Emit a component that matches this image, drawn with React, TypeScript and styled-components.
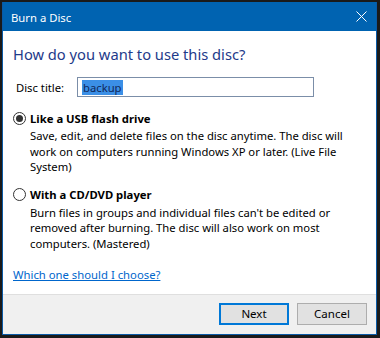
import React from "react";
import styled, { createGlobalStyle } from "styled-components";

const Global = createGlobalStyle`
  html, body { margin: 0; padding: 0; background: #1a1a1a; }
  body { font-family: "Noto Sans", "Liberation Sans", sans-serif; }
  * { box-sizing: border-box; }
`;

const Frame = styled.div`
  width: 380px;
  height: 338px;
  padding: 2px 3px 3px 2px;
  background: #1a1a1a;
`;

const Window = styled.div`
  width: 375px;
  height: 333px;
  display: flex;
  flex-direction: column;
  background: #ffffff;
  border: 1px solid #0a5aa6;
  border-top: none;
`;

const TitleBar = styled.div`
  height: 29px;
  flex: none;
  display: flex;
  align-items: center;
  justify-content: space-between;
  background: #0063b1;
  color: #ffffff;
  padding: 0 9px 0 8px;
  font-size: 11.3px;
`;

const TitleText = styled.span`
  padding-top: 1px;
`;

const CloseButton = styled.div`
  width: 12px;
  height: 12px;
  display: flex;
  align-items: center;
  justify-content: center;
`;

const Body = styled.div`
  flex: 1;
  padding: 13px 12px 0 10px;
  color: #000000;
  font-size: 11.25px;
`;

const Heading = styled.div`
  font-size: 14.7px;
  line-height: 21px;
  color: #1e3a8a;
`;

const TitleRow = styled.div`
  display: flex;
  align-items: center;
  margin-top: 12px;
  padding-left: 3px;
`;

const Label = styled.span`
  width: 61px;
  flex: none;
`;

const Input = styled.div`
  width: 237px;
  height: 20px;
  border: 1px solid #7b8ea8;
  display: flex;
  align-items: center;
  padding-left: 4px;
`;

const Selection = styled.span`
  background: #3b8fe6;
  color: #10285a;
  line-height: 15px;
  padding: 0 1px;
`;

const Option = styled.div<{ $first?: boolean }>`
  margin-top: ${(p) => (p.$first ? "13px" : "12px")};
`;

const OptionHead = styled.div`
  display: flex;
  align-items: center;
  gap: 4px;
  height: 16px;
`;

const Radio = styled.span<{ $checked?: boolean }>`
  width: 13px;
  height: 13px;
  border-radius: 50%;
  border: 1px solid #333333;
  display: flex;
  align-items: center;
  justify-content: center;
  flex: none;
  &::after {
    content: "";
    width: 7px;
    height: 7px;
    border-radius: 50%;
    background: ${(p) => (p.$checked ? "#333333" : "transparent")};
  }
`;

const OptionLabel = styled.span`
  font-weight: 700;
  font-size: 11.3px;
`;

const Description = styled.div`
  padding-left: 17px;
  line-height: 15.5px;
  margin-top: 2px;
`;

const Link = styled.a`
  display: inline-block;
  margin-top: 16px;
  color: #0066cc;
  text-decoration: underline;
  font-size: 11.3px;
  cursor: pointer;
`;

const Footer = styled.div`
  height: 40px;
  flex: none;
  background: #f0f0f0;
  border-top: 1px solid #dfdfdf;
  display: flex;
  justify-content: flex-end;
  align-items: center;
  gap: 8px;
  padding: 0 9px 2px 0;
`;

const Button = styled.button<{ $default?: boolean }>`
  width: 70px;
  height: 22px;
  font-family: inherit;
  font-size: 11.5px;
  color: #000000;
  background: #e1e1e1;
  border: ${(p) => (p.$default ? "2px solid #0078d7" : "1px solid #adadad")};
  padding: 0;
`;

export default function App() {
  return (
    <>
      <Global />
      <Frame>
        <Window>
          <TitleBar>
            <TitleText>Burn a Disc</TitleText>
            <CloseButton>
              <svg width="11" height="11" viewBox="0 0 11 11">
                <path d="M0.5 0.5 L10.5 10.5 M10.5 0.5 L0.5 10.5" stroke="#ffffff" strokeWidth="1" fill="none" />
              </svg>
            </CloseButton>
          </TitleBar>
          <Body>
            <Heading>How do you want to use this disc?</Heading>
            <TitleRow>
              <Label>Disc title:</Label>
              <Input>
                <Selection>backup</Selection>
              </Input>
            </TitleRow>
            <Option $first>
              <OptionHead>
                <Radio $checked />
                <OptionLabel>Like a USB flash drive</OptionLabel>
              </OptionHead>
              <Description>
                Save, edit, and delete files on the disc anytime. The disc will
                <br />
                work on computers running Windows XP or later. (Live File
                <br />
                System)
              </Description>
            </Option>
            <Option>
              <OptionHead>
                <Radio />
                <OptionLabel>With a CD/DVD player</OptionLabel>
              </OptionHead>
              <Description>
                Burn files in groups and individual files can't be edited or
                <br />
                removed after burning. The disc will also work on most
                <br />
                computers. (Mastered)
              </Description>
            </Option>
            <Link>Which one should I choose?</Link>
          </Body>
          <Footer>
            <Button $default>Next</Button>
            <Button>Cancel</Button>
          </Footer>
        </Window>
      </Frame>
    </>
  );
}
